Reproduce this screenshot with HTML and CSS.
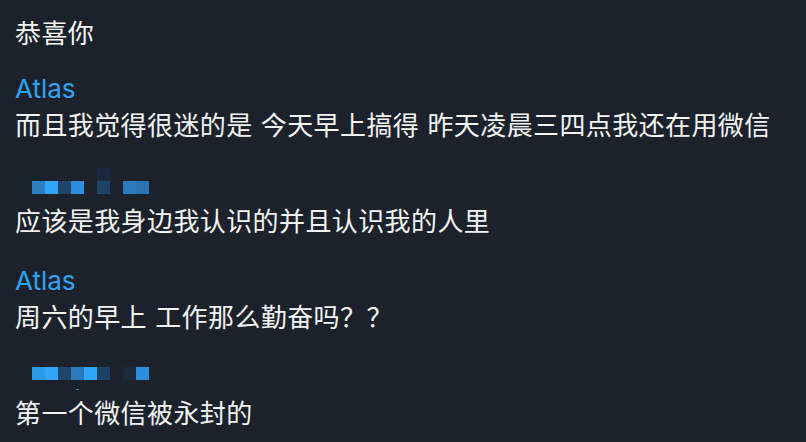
FILE: index.html
```html
<!DOCTYPE html>
<html lang="zh">
<head>
<meta charset="utf-8">
<link rel="stylesheet" href="styles.css">
</head>
<body>
<div class="chat">
  <div class="msg first">
    <div class="text">恭喜你</div>
  </div>
  <div class="msg">
    <div class="name">Atlas</div>
    <div class="text">而且我觉得很迷的是 今天早上搞得 昨天凌晨三四点我还在用微信</div>
  </div>
  <div class="msg">
    <div class="name blur blur-a">
      <div class="px-row">
        <span class="c e"></span><span class="c e"></span><span class="c e"></span><span class="c e"></span><span class="c e"></span><span class="c d0"></span>
      </div>
      <div class="px-row">
        <span class="c b2"></span><span class="c b1"></span><span class="c d1"></span><span class="c b3"></span><span class="c e"></span><span class="c d2"></span><span class="c e"></span><span class="c b4"></span><span class="c b5"></span>
      </div>
    </div>
    <div class="text">应该是我身边我认识的并且认识我的人里</div>
  </div>
  <div class="msg">
    <div class="name">Atlas</div>
    <div class="text">周六的早上 工作那么勤奋吗？？</div>
  </div>
  <div class="msg">
    <div class="name blur blur-b">
      <div class="px-row">
        <span class="c b6"></span><span class="c b1"></span><span class="c d1"></span><span class="c b4"></span><span class="c b1"></span><span class="c d2"></span><span class="c e"></span><span class="c d0"></span><span class="c b3"></span>
      </div>
      <div class="dash"></div>
    </div>
    <div class="text">第一个微信被永封的</div>
  </div>
</div>
</body>
</html>
```
FILE: styles.css
```css
html, body {
  margin: 0;
  padding: 0;
  background: #1b222c;
}
body {
  width: 806px;
  height: 442px;
  overflow: hidden;
}
.chat {
  padding: 14px 0 0 15px;
  display: flex;
  flex-direction: column;
}
.msg {
  display: flex;
  flex-direction: column;
  margin-bottom: 26px;
}
.msg.first {
  margin-bottom: 22px;
}
.name {
  height: 35px;
  line-height: 35px;
  font-family: "Inter", "Liberation Sans", sans-serif;
  font-size: 26px;
  color: #2fa3f6;
}
.text {
  height: 35px;
  line-height: 35px;
  font-family: "Noto Sans CJK SC", sans-serif;
  font-size: 26px;
  letter-spacing: 0.4px;
  word-spacing: 2px;
  color: #f4f4f4;
  white-space: nowrap;
}
.blur {
  display: flex;
  flex-direction: column;
  padding-left: 17px;
  box-sizing: border-box;
}
.blur-a {
  padding-top: 1px;
}
.blur-b {
  padding-top: 8px;
}
.px-row {
  display: flex;
  height: 13px;
}
.c {
  width: 13px;
  height: 13px;
  flex: none;
}
.e { background: transparent; }
.b1 { background: #2fa6fb; }
.b2 { background: #2b7fc3; }
.b3 { background: #2f8edb; }
.b4 { background: #2a79ba; }
.b5 { background: #2a74b2; }
.b6 { background: #2d9ae6; }
.d0 { background: #1a2a3c; }
.d1 { background: #1f4669; }
.d2 { background: #1d4466; }
.dash {
  width: 3px;
  height: 1px;
  margin: 9px 0 0 44px;
  background: #2a8ad0;
}
```
